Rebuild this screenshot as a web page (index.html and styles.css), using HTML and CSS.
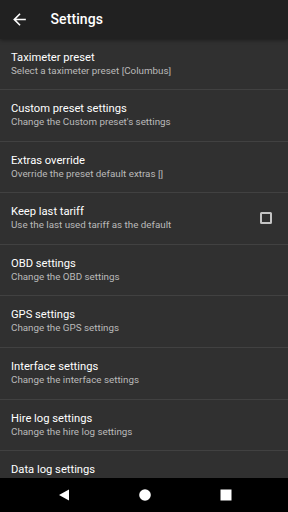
FILE: index.html
```html
<!DOCTYPE html>
<html>
<head>
<meta charset="utf-8">
<link rel="stylesheet" href="styles.css">
</head>
<body>
<div class="screen">
  <header class="toolbar">
    <svg class="back" viewBox="0 0 24 24" width="19" height="19"><path fill="#fff" d="M20 11H7.83l5.59-5.59L12 4l-8 8 8 8 1.41-1.41L7.83 13H20v-2z"/></svg>
    <span class="toolbar-title">Settings</span>
  </header>
  <main class="list">
    <div class="row"><div class="texts"><div class="title">Taximeter preset</div><div class="sub">Select a taximeter preset [Columbus]</div></div></div>
    <div class="row"><div class="texts"><div class="title">Custom preset settings</div><div class="sub">Change the Custom preset's settings</div></div></div>
    <div class="row"><div class="texts"><div class="title">Extras override</div><div class="sub">Override the preset default extras []</div></div></div>
    <div class="row"><div class="texts"><div class="title">Keep last tariff</div><div class="sub">Use the last used tariff as the default</div></div><div class="check"></div></div>
    <div class="row"><div class="texts"><div class="title">OBD settings</div><div class="sub">Change the OBD settings</div></div></div>
    <div class="row"><div class="texts"><div class="title">GPS settings</div><div class="sub">Change the GPS settings</div></div></div>
    <div class="row"><div class="texts"><div class="title">Interface settings</div><div class="sub">Change the interface settings</div></div></div>
    <div class="row"><div class="texts"><div class="title">Hire log settings</div><div class="sub">Change the hire log settings</div></div></div>
    <div class="row"><div class="texts"><div class="title">Data log settings</div></div></div>
  </main>
  <nav class="navbar">
    <svg class="nav-ico" viewBox="0 0 24 24" width="24" height="24"><polygon fill="#fff" points="17,6.5 17,17.5 7,12"/></svg>
    <svg class="nav-ico" viewBox="0 0 24 24" width="24" height="24"><circle fill="#fff" cx="12" cy="12" r="5.8"/></svg>
    <svg class="nav-ico" viewBox="0 0 24 24" width="24" height="24"><rect fill="#fff" x="6.5" y="6.5" width="11" height="11"/></svg>
  </nav>
</div>
</body>
</html>
```
FILE: styles.css
```css
* { box-sizing: border-box; }
html, body { margin: 0; padding: 0; }
body {
  width: 288px;
  height: 512px;
  overflow: hidden;
  background: #303030;
  font-family: Roboto, "Noto Sans", sans-serif;
}
.screen {
  width: 288px;
  height: 512px;
  display: flex;
  flex-direction: column;
  background: #303030;
}
.toolbar {
  flex: 0 0 38.5px;
  height: 38.5px;
  background: #212121;
  display: flex;
  align-items: center;
  padding-left: 10px;
  position: relative;
  z-index: 2;
  box-shadow: 0 1px 4px rgba(0,0,0,0.45);
}
.back { display: block; flex: none; }
.toolbar-title {
  margin-left: 21.5px;
  color: #fff;
  font-size: 14px;
  font-weight: 500;
  letter-spacing: 0.1px;
  line-height: 16px;
}
.list {
  flex: 1 1 auto;
  overflow: hidden;
}
.row {
  height: 51.6px;
  border-bottom: 1px solid #414141;
  display: flex;
  align-items: flex-start;
  padding: 12px 16px 0 11px;
}
.texts { flex: 1 1 auto; min-width: 0; }
.title {
  color: #fff;
  font-size: 11.2px;
  line-height: 14px;
  white-space: nowrap;
}
.sub {
  color: #bababa;
  font-size: 9.8px;
  line-height: 12px;
  white-space: nowrap;
}
.check {
  flex: none;
  width: 12px;
  height: 12px;
  margin-top: 6.5px;
  border: 2px solid #c4c4c4;
  border-radius: 1.5px;
}
.navbar {
  flex: 0 0 34px;
  height: 34px;
  background: #000;
  display: flex;
  align-items: center;
  justify-content: center;
  gap: 57px;
  padding-left: 1px;
}
.nav-ico { display: block; flex: none; }
```
